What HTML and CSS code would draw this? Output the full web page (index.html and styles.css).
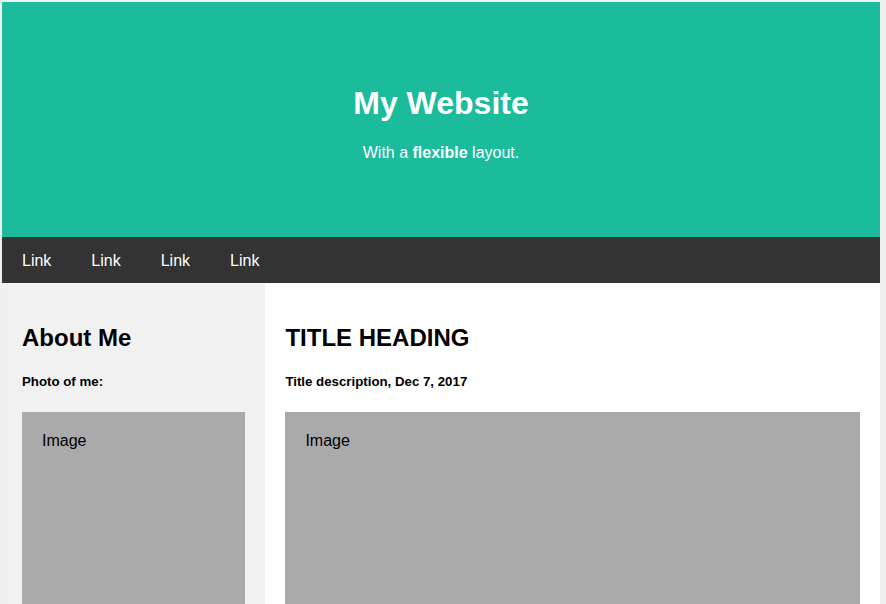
FILE: index.html
```html
<!DOCTYPE html>
<html lang="en">
<head>
<meta charset="utf-8">
<title>My Website</title>
<link rel="stylesheet" href="styles.css">
</head>
<body>
<div class="page">
  <div class="header">
    <h1>My Website</h1>
    <p>With a <b>flexible</b> layout.</p>
  </div>
  <div class="navbar">
    <a href="#">Link</a>
    <a href="#">Link</a>
    <a href="#">Link</a>
    <a href="#">Link</a>
  </div>
  <div class="row">
    <div class="side">
      <h2>About Me</h2>
      <h5>Photo of me:</h5>
      <div class="fakeimg tall">Image</div>
    </div>
    <div class="main">
      <h2>TITLE HEADING</h2>
      <h5>Title description, Dec 7, 2017</h5>
      <div class="fakeimg tall">Image</div>
    </div>
  </div>
</div>
</body>
</html>
```
FILE: styles.css
```css
* {
  box-sizing: border-box;
}

html {
  overflow: hidden;
}

body {
  margin: 0;
  padding: 2px 6px 0 2px;
  background: #f0f0f0;
  font-family: "Liberation Sans", Arial, sans-serif;
  font-size: 16px;
}

.page {
  background: #fff;
}

.header {
  padding: 60px;
  text-align: center;
  background: #1abc9c;
  color: #fff;
}

.header h1 {
  font-size: 32px;
  margin: 23.44px 0 21.44px;
}

.header p {
  margin: 16px 0 15px;
}

.navbar {
  display: flex;
  background-color: #333;
}

.navbar a {
  color: #fff;
  padding: 15px 20px 13px;
  text-decoration: none;
  text-align: center;
}

.row {
  display: flex;
}

.side {
  flex: 0 0 30%;
  background-color: #f1f1f1;
  padding: 20px;
}

.main {
  flex: 0 0 70%;
  background-color: #fff;
  padding: 20px;
}

h2 {
  font-size: 24px;
  margin: 20.92px 0 19.92px;
}

h5 {
  font-size: 13.28px;
  margin: 22.18px 0 23.18px;
}

.fakeimg {
  background-color: #aaa;
  width: 100%;
  padding: 20px;
}

.fakeimg.tall {
  height: 200px;
}
```
